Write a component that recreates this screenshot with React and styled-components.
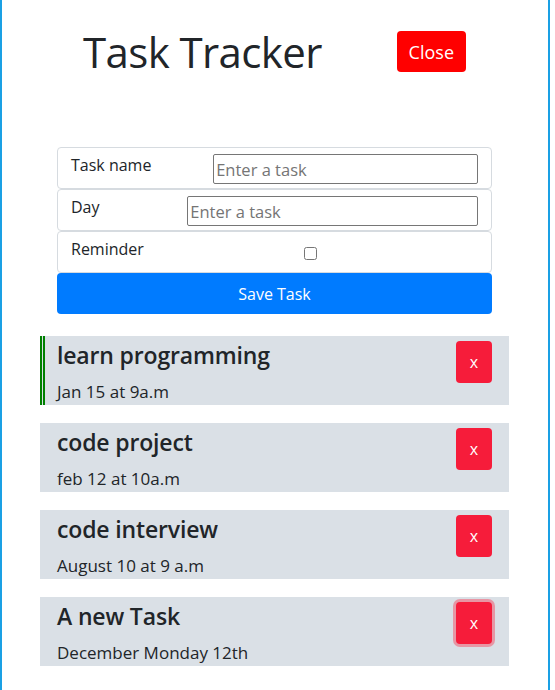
import styled, { createGlobalStyle } from "styled-components";

const GlobalStyle = createGlobalStyle`
  body {
    margin: 0;
    font-family: "Open Sans", "Noto Sans", sans-serif;
    color: #212529;
    background: #ffffff;
  }
  * {
    box-sizing: border-box;
  }
`;

const Container = styled.div`
  width: 550px;
  min-height: 100vh;
  padding: 31px 0 24px;
  border-left: 2px solid #1aa0e4;
  border-right: 2px solid #1aa0e4;
`;

const Header = styled.header`
  display: flex;
  align-items: center;
  justify-content: space-between;
  height: 41px;
  padding: 0 82px 0 81px;
`;

const Title = styled.h1`
  margin: 0;
  font-size: 42px;
  font-weight: 500;
  line-height: 1;
  letter-spacing: -0.6px;
`;

const CloseButton = styled.button`
  height: 41px;
  padding: 0 12px;
  border: none;
  border-radius: 4px;
  background: #ff0000;
  color: #ffffff;
  font-family: inherit;
  font-size: 18px;
`;

const Form = styled.form`
  width: 435px;
  margin: 75px 0 0 55px;
`;

const Row = styled.div`
  display: flex;
  align-items: flex-start;
  height: 42px;
  padding: 5px 13px;
  border: 1px solid #d6dbe0;
  border-radius: 4px;
`;

const Label = styled.label`
  flex: ${({ $grow }) => ($grow ? "1 1 auto" : "0 0 auto")};
  font-size: 16px;
  line-height: 1.5;
`;

const TextInput = styled.input`
  flex: 1 1 203px;
  min-width: 0;
  height: 30px;
  margin-top: 1px;
  padding: 1px 2px;
  border: 1px solid #767676;
  border-radius: 2px;
  font-family: inherit;
  font-size: 16.5px;
  color: #212529;
  &::placeholder {
    color: #757575;
  }
`;

const CheckCell = styled.div`
  flex: 1;
  display: flex;
  align-items: center;
  justify-content: center;
  height: 32px;
`;

const Checkbox = styled.input`
  width: 13px;
  height: 13px;
  margin: 0;
`;

const SaveButton = styled.button`
  display: block;
  width: 100%;
  height: 41px;
  border: none;
  border-radius: 4px;
  background: #007bff;
  color: #ffffff;
  font-family: inherit;
  font-size: 16px;
`;

const TaskList = styled.div`
  display: flex;
  flex-direction: column;
  gap: 18px;
  width: 469px;
  margin: 22px 0 0 38px;
`;

const Task = styled.div`
  display: flex;
  justify-content: space-between;
  align-items: flex-start;
  height: 69px;
  padding: 5px 17px 0 12px;
  background: #dae0e6;
  border-left: 5px double ${({ $reminder }) => ($reminder ? "#008000" : "transparent")};
`;

const TaskText = styled.div`
  display: flex;
  flex-direction: column;
`;

const TaskTitle = styled.h3`
  margin: 0;
  font-size: 23px;
  font-weight: 600;
  line-height: 29px;
  letter-spacing: -0.15px;
`;

const TaskDay = styled.p`
  margin: 9px 0 0;
  font-size: 17px;
  line-height: 25px;
`;

const DeleteButton = styled.button`
  width: 36px;
  height: 42px;
  padding: 0;
  border: none;
  border-radius: 4px;
  background: #f61c3a;
  color: #ffffff;
  font-family: inherit;
  font-size: 16px;
  box-shadow: ${({ $focused }) =>
    $focused ? "0 0 0 3px rgba(240, 100, 120, 0.6)" : "none"};
`;

const tasks = [
  { id: 1, text: "learn programming", day: "Jan 15 at 9a.m", reminder: true },
  { id: 2, text: "code project", day: "feb 12 at 10a.m", reminder: false },
  { id: 3, text: "code interview", day: "August 10 at 9 a.m", reminder: false },
  { id: 4, text: "A new Task", day: "December Monday 12th", reminder: false },
];

export default function App() {
  return (
    <>
      <GlobalStyle />
      <Container>
        <Header>
          <Title>Task Tracker</Title>
          <CloseButton>Close</CloseButton>
        </Header>

        <Form onSubmit={(e) => e.preventDefault()}>
          <Row>
            <Label $grow>Task name</Label>
            <TextInput type="text" placeholder="Enter a task" />
          </Row>
          <Row>
            <Label $grow>Day</Label>
            <TextInput type="text" placeholder="Enter a task" />
          </Row>
          <Row>
            <Label>Reminder</Label>
            <CheckCell>
              <Checkbox type="checkbox" />
            </CheckCell>
          </Row>
          <SaveButton type="submit">Save Task</SaveButton>
        </Form>

        <TaskList>
          {tasks.map((task, i) => (
            <Task key={task.id} $reminder={task.reminder}>
              <TaskText>
                <TaskTitle>{task.text}</TaskTitle>
                <TaskDay>{task.day}</TaskDay>
              </TaskText>
              <DeleteButton $focused={i === tasks.length - 1}>x</DeleteButton>
            </Task>
          ))}
        </TaskList>
      </Container>
    </>
  );
}
